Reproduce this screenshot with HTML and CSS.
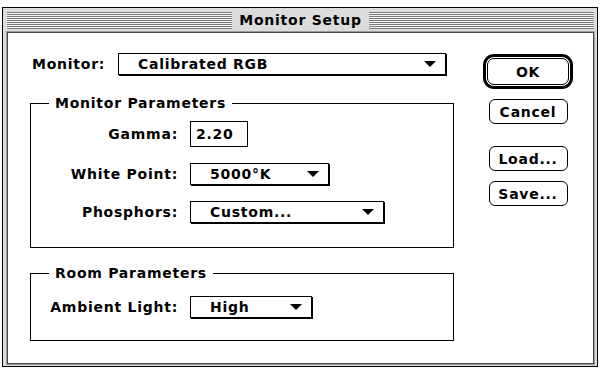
FILE: index.html
```html
<!DOCTYPE html>
<html lang="en">
<head>
    <meta charset="UTF-8">
    <title>Monitor Setup</title>
    <link rel="stylesheet" href="styles.css">
</head>
<body>
<div class="window">
    <div class="titlebar">
        <span class="stripes"></span>
        <span class="title">Monitor Setup</span>
        <span class="stripes"></span>
    </div>
    <div class="frame">
        <div class="main">
            <div class="monitor_row">
                <span class="monitor_label">Monitor:</span>
                <div class="popup popup_monitor"><span>Calibrated RGB</span><i class="arrow"></i></div>
            </div>

            <fieldset class="group group_monitor">
                <legend>Monitor Parameters</legend>
                <div class="fields">
                    <label>Gamma:</label>
                    <input class="text_field" type="text" value="2.20">

                    <label>White Point:</label>
                    <div class="popup popup_white"><span>5000°K</span><i class="arrow"></i></div>

                    <label>Phosphors:</label>
                    <div class="popup popup_phos"><span>Custom...</span><i class="arrow"></i></div>
                </div>
            </fieldset>

            <fieldset class="group group_room">
                <legend>Room Parameters</legend>
                <div class="fields">
                    <label>Ambient Light:</label>
                    <div class="popup popup_light"><span>High</span><i class="arrow"></i></div>
                </div>
            </fieldset>
        </div>

        <div class="buttons">
            <div class="default_ring"><button class="btn btn_ok">OK</button></div>
            <button class="btn btn_cancel">Cancel</button>
            <button class="btn btn_load">Load...</button>
            <button class="btn btn_save">Save...</button>
        </div>
    </div>
</div>
</body>
</html>
```

FILE: styles.css
```css
* {
    padding: 0;
    margin: 0;
    box-sizing: border-box;
}

body {
    background: #fff;
    font-family: "DejaVu Sans", "Liberation Sans", sans-serif;
    font-weight: bold;
    font-size: 14px;
    letter-spacing: 0.75px;
    color: #000;
}

.window {
    margin: 7px 0 0 2px;
    width: 596px;
    height: 360px;
    border: 1px solid #000;
    background: #dcdcdc;
    padding: 0 3px 2px 4px;
    display: flex;
    flex-direction: column;
}

.titlebar {
    height: 24px;
    display: flex;
    align-items: center;
}
.titlebar .stripes {
    flex: 1;
    height: 17px;
    background: repeating-linear-gradient(#7a7a7a 0 1px, #f4f4f4 1px 2px);
}
.titlebar .title {
    padding: 0 7px;
    line-height: 17px;
}

.frame {
    flex: 1;
    border: 1px solid #4a4a4a;
    box-shadow: 0 0 0 1px #9a9a9a;
    background: #fff;
    display: flex;
    padding: 20px 0 0 22px;
}

.main {
    width: 424px;
}

.monitor_row {
    display: flex;
    align-items: center;
    margin-left: 2px;
}
.monitor_label {
    width: 86px;
}

.popup {
    height: 22px;
    border: 1px solid #000;
    box-shadow: 1px 1px 0 #000;
    display: flex;
    align-items: center;
    justify-content: space-between;
    padding: 0 9px 0 19px;
    line-height: 20px;
}
.popup_monitor {
    width: 328px;
}
.popup_white {
    width: 139px;
}
.popup_phos {
    width: 194px;
}
.popup_light {
    width: 122px;
}
.arrow {
    width: 0;
    height: 0;
    border-left: 6px solid transparent;
    border-right: 6px solid transparent;
    border-top: 6px solid #000;
}

.group {
    border: 1px solid #000;
    width: 424px;
}
.group legend {
    margin-left: 18px;
    padding: 0 6px;
    line-height: 16px;
}
.group_monitor {
    margin-top: 20px;
    padding: 10px 0 24px;
}
.group_room {
    margin-top: 17px;
    padding: 15px 0 22px;
}

.fields {
    display: grid;
    grid-template-columns: 147px auto;
    column-gap: 12px;
    row-gap: 16px;
    align-items: center;
    justify-items: start;
}
.fields label {
    justify-self: end;
}

.text_field {
    width: 58px;
    height: 26px;
    border: 1px solid #000;
    padding-left: 5px;
    font: inherit;
    letter-spacing: inherit;
    outline: none;
}

.buttons {
    margin-left: 29px;
    margin-top: 1px;
    width: 90px;
    display: flex;
    flex-direction: column;
    align-items: center;
}

.btn {
    font: inherit;
    letter-spacing: inherit;
    color: #000;
    background: #fff;
    border: 1px solid #000;
    border-radius: 6px;
    width: 79px;
    height: 25px;
}
.default_ring {
    width: 90px;
    height: 35px;
    border: 3px solid #000;
    border-radius: 11px;
    padding: 1px;
}
.default_ring .btn_ok {
    width: 100%;
    height: 100%;
    border-radius: 7px;
}
.btn_cancel {
    margin-top: 10px;
}
.btn_load {
    margin-top: 22px;
}
.btn_save {
    margin-top: 10px;
}
```
